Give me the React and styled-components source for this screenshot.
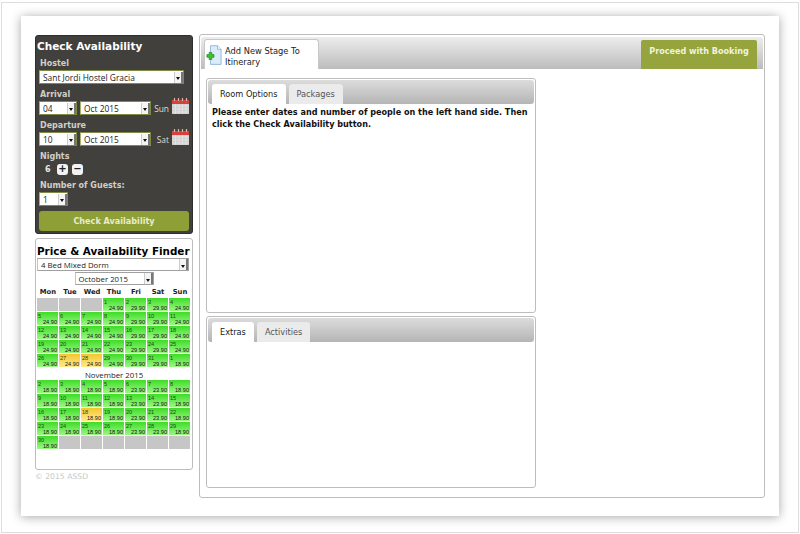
import React from 'react';
import styled, { createGlobalStyle } from 'styled-components';

const GlobalStyle = createGlobalStyle`
  html, body {
    margin: 0;
    padding: 0;
    background: #fff;
  }
  body {
    font-family: 'DejaVu Sans', Verdana, sans-serif;
    color: #111;
  }
  * {
    box-sizing: border-box;
  }
`;

const october = [
  [null, null, null, [1, '24.90'], [2, '29.90'], [3, '29.90'], [4, '24.90']],
  [[5, '24.90'], [6, '24.90'], [7, '24.90'], [8, '24.90'], [9, '29.90'], [10, '29.90'], [11, '24.90']],
  [[12, '24.90'], [13, '24.90'], [14, '24.90'], [15, '24.90'], [16, '29.90'], [17, '29.90'], [18, '24.90']],
  [[19, '24.90'], [20, '24.90'], [21, '24.90'], [22, '24.90'], [23, '29.90'], [24, '29.90'], [25, '24.90']],
  [[26, '24.90'], [27, '24.90', true], [28, '24.90', true], [29, '24.90'], [30, '29.90'], [31, '29.90'], [1, '18.90']],
];

const november = [
  [[2, '18.90'], [3, '18.90'], [4, '18.90'], [5, '18.90'], [6, '23.90'], [7, '23.90'], [8, '18.90']],
  [[9, '18.90'], [10, '18.90'], [11, '18.90'], [12, '18.90'], [13, '23.90'], [14, '23.90'], [15, '18.90']],
  [[16, '18.90'], [17, '18.90'], [18, '18.90', true], [19, '18.90'], [20, '23.90'], [21, '23.90'], [22, '18.90']],
  [[23, '18.90'], [24, '18.90'], [25, '18.90'], [26, '18.90'], [27, '23.90'], [28, '23.90'], [29, '18.90']],
  [[30, '18.90'], null, null, null, null, null, null],
];

const weekDays = ['Mon', 'Tue', 'Wed', 'Thu', 'Fri', 'Sat', 'Sun'];

const CalendarIcon = () => (
  <CalendarSvg width="17" height="16" viewBox="0 0 17 16">
    <rect x="0" y="5" width="17" height="11" fill="#cfcfcf" />
    <path d="M0 8h17M0 11h17M0 14h17M3.5 5v11M7 5v11M10.5 5v11M14 5v11" stroke="#e6e6e6" strokeWidth=".8" />
    <rect x="0" y="2" width="17" height="4" fill="#d8403a" />
    <path d="M2.5 0v3M6.5 0v3M10.5 0v3M14.5 0v3" stroke="#d9b6b2" strokeWidth="1.2" />
  </CalendarSvg>
);

const StageIcon = () => (
  <StageSvg width="16" height="21" viewBox="0 0 18 23">
    <path d="M5 .5h8l4 4v17H5z" fill="#dcebfa" stroke="#8db3da" />
    <path d="M13 .5v4h4" fill="#fff" stroke="#8db3da" />
    <path d="M3.5 8h3v2.5H9v3H6.5V16h-3v-2.5H1v-3h2.5z" fill="#3fc030" stroke="#1f8f24" strokeWidth=".8" />
  </StageSvg>
);

const Dropdown = ({ children, width, plain }) => (
  <SelectBox $width={width} $plain={plain}>
    <SelectText>{children}</SelectText>
    <SelectArrow />
  </SelectBox>
);

const Calendar = ({ rows }) => (
  <CalendarGrid>
    {rows.flat().map((day, index) =>
      day ? (
        <DayCell key={index} $hot={day[2]}>
          <DayNumber>{day[0]}</DayNumber>
          <DayPrice>{day[1]}</DayPrice>
        </DayCell>
      ) : (
        <EmptyCell key={index} />
      )
    )}
  </CalendarGrid>
);

const App = () => (
  <>
    <GlobalStyle />
    <Frame>
      <Page>
        <Sidebar>
          <AvailabilityPanel>
            <PanelTitle>Check Availability</PanelTitle>
            <FieldLabel>Hostel</FieldLabel>
            <Dropdown width="145px">Sant Jordi Hostel Gracia</Dropdown>
            <FieldLabel>Arrival</FieldLabel>
            <DateRow>
              <Dropdown width="38px">04</Dropdown>
              <Dropdown width="71px">Oct 2015</Dropdown>
              <DayName>Sun</DayName>
              <CalendarIcon />
            </DateRow>
            <FieldLabel>Departure</FieldLabel>
            <DateRow>
              <Dropdown width="38px">10</Dropdown>
              <Dropdown width="71px">Oct 2015</Dropdown>
              <DayName>Sat</DayName>
              <CalendarIcon />
            </DateRow>
            <FieldLabel>Nights</FieldLabel>
            <NightsRow>
              <NightsValue>6</NightsValue>
              <RoundButton>+</RoundButton>
              <RoundButton>−</RoundButton>
            </NightsRow>
            <FieldLabel>Number of Guests:</FieldLabel>
            <Dropdown width="29px">1</Dropdown>
            <CheckButton>Check Availability</CheckButton>
          </AvailabilityPanel>
          <FinderPanel>
            <FinderTitle>Price &amp; Availability Finder</FinderTitle>
            <Dropdown width="152px" plain>4 Bed Mixed Dorm</Dropdown>
            <MonthPicker>
              <Dropdown width="79px" plain>October 2015</Dropdown>
            </MonthPicker>
            <WeekHeader>
              {weekDays.map((day) => (
                <span key={day}>{day}</span>
              ))}
            </WeekHeader>
            <Calendar rows={october} />
            <MonthLabel>November 2015</MonthLabel>
            <Calendar rows={november} />
          </FinderPanel>
          <Copyright>© 2015 ASSD</Copyright>
        </Sidebar>
        <Main>
          <MainHeader>
            <StageTab>
              <StageIcon />
              <span>
                Add New Stage To
                <br />
                Itinerary
              </span>
            </StageTab>
            <ProceedButton>Proceed with Booking</ProceedButton>
          </MainHeader>
          <TabPanel $height="235px" $top="9px">
            <TabBar>
              <Tab $active>Room Options</Tab>
              <Tab>Packages</Tab>
            </TabBar>
            <Notice>
              Please enter dates and number of people on the left hand side. Then click the Check
              Availability button.
            </Notice>
          </TabPanel>
          <TabPanel $height="172px" $top="3px">
            <TabBar>
              <Tab $active>Extras</Tab>
              <Tab>Activities</Tab>
            </TabBar>
          </TabPanel>
        </Main>
      </Page>
    </Frame>
  </>
);

export default App;

const Frame = styled.div`
  width: 798px;
  height: 531px;
  margin: 2px 1px 0;
  overflow: hidden;
  padding: 13px 19px 0;
  background: #fff;
  border: 1px solid #dedede;
`;

const Page = styled.div`
  display: flex;
  align-items: flex-start;
  width: 758px;
  height: 500px;
  padding: 18px 0 0 14px;
  background: #fff;
  box-shadow: 0 1px 10px rgba(0, 0, 0, 0.35);
`;

const Sidebar = styled.div`
  width: 158px;
  margin-top: 1px;
`;

const AvailabilityPanel = styled.div`
  height: 199px;
  padding: 3px 3px 0;
  background: #41403d;
  border: 1px solid #2e2e2c;
  border-radius: 3px;
  color: #fff;
`;

const PanelTitle = styled.h2`
  margin: 0 0 0 -2px;
  font-size: 10.5px;
  line-height: 14px;
  font-weight: 700;
  white-space: nowrap;
`;

const FieldLabel = styled.div`
  margin: 5px 0 0 1px;
  font-size: 8px;
  line-height: 12px;
  font-weight: 700;
  white-space: nowrap;
  color: #cfcfc8;
`;

const SelectBox = styled.div`
  display: flex;
  align-items: center;
  justify-content: space-between;
  width: ${(p) => p.$width};
  height: ${(p) => (p.$plain ? '13px' : '14px')};
  padding-left: 3px;
  background: #fff;
  border: 1px solid ${(p) => (p.$plain ? '#a0a0a0' : '#7f8a45')};
  border-left-color: ${(p) => (p.$plain ? '#c4c4c4' : '#a8b070')};
  font-family: 'Open Sans', sans-serif;
  font-size: ${(p) => (p.$plain ? '7.8px' : '8.4px')};
  color: #222;
`;

const SelectText = styled.span`
  white-space: nowrap;
`;

const SelectArrow = styled.span`
  display: flex;
  align-items: center;
  justify-content: center;
  width: 9px;
  height: 11px;
  flex: none;
  padding-top: 3px;
  background: #f4f4f4;
  border-left: 1px solid #ccc;
  border-right: 2px solid #777;
  &::after {
    content: '';
    border-top: 3px solid #111;
    border-left: 2.5px solid transparent;
    border-right: 2.5px solid transparent;
  }
`;

const DateRow = styled.div`
  display: flex;
  align-items: center;
  gap: 3px;
  height: 14px;
`;

const DayName = styled.span`
  width: 15px;
  font-family: 'Open Sans', sans-serif;
  font-size: 8.4px;
  text-align: right;
  color: #ddd;
`;

const CalendarSvg = styled.svg`
  flex: none;
  margin-top: -5px;
`;

const StageSvg = styled.svg`
  flex: none;
  margin: -1px 3px 0 0;
`;

const NightsRow = styled.div`
  display: flex;
  align-items: center;
  gap: 4px;
  height: 12px;
  padding-left: 6px;
`;

const NightsValue = styled.span`
  width: 8px;
  font-size: 8px;
  font-weight: 700;
  color: #e8e8e8;
`;

const RoundButton = styled.span`
  display: flex;
  align-items: center;
  justify-content: center;
  width: 11px;
  height: 11px;
  background: #f2f2f2;
  border-radius: 3px;
  font-size: 10px;
  font-weight: 700;
  line-height: 1;
  color: #222;
`;

const CheckButton = styled.div`
  height: 20px;
  margin-top: 5px;
  background: #8e9f37;
  border-radius: 3px;
  font-size: 8.1px;
  line-height: 20px;
  font-weight: 700;
  text-align: center;
  color: #e8eccb;
`;

const FinderPanel = styled.div`
  height: 232px;
  margin-top: 4px;
  padding: 6px 1px 0;
  background: #fff;
  border: 1px solid #bdbdbd;
  border-radius: 3px;
`;

const FinderTitle = styled.h3`
  margin: 0;
  font-size: 10.4px;
  line-height: 13px;
  font-weight: 700;
  white-space: nowrap;
  color: #000;
`;

const MonthPicker = styled.div`
  display: flex;
  justify-content: center;
  margin-top: 1px;
`;

const WeekHeader = styled.div`
  display: grid;
  grid-template-columns: repeat(7, 22px);
  height: 11px;
  margin-top: 2px;
  font-size: 6.8px;
  line-height: 11px;
  font-weight: 700;
  text-align: center;
  color: #222;
`;

const CalendarGrid = styled.div`
  display: grid;
  grid-template-columns: repeat(7, 22px);
  grid-auto-rows: 14px;
`;

const DayCell = styled.div`
  display: flex;
  flex-direction: column;
  margin: 0 1px 1px 0;
  padding: 1px 1px 0;
  overflow: hidden;
  background: ${(p) =>
    p.$hot
      ? 'linear-gradient(#f6c530, #fdeb8c)'
      : 'linear-gradient(#3fdc28, #9af782)'};
  font-family: 'Liberation Sans', Arial, sans-serif;
  font-size: 5.6px;
  line-height: 6px;
  color: #1f4a18;
`;

const DayNumber = styled.span``;

const DayPrice = styled.span`
  text-align: right;
  color: #111;
`;

const EmptyCell = styled.div`
  margin: 0 1px 1px 0;
  background: #c6c6c6;
`;

const MonthLabel = styled.div`
  height: 10px;
  margin-top: 2px;
  font-family: 'Open Sans', sans-serif;
  font-size: 7.8px;
  line-height: 10px;
  text-align: center;
  color: #222;
`;

const Copyright = styled.div`
  margin-top: 1px;
  font-size: 7.7px;
  line-height: 12px;
  color: #c8c8c8;
`;

const Main = styled.div`
  width: 566px;
  height: 464px;
  margin-left: 6px;
  padding: 2px 1px 0;
  background: #fff;
  border: 1px solid #bdbdbd;
  border-radius: 3px;
`;

const MainHeader = styled.div`
  display: flex;
  align-items: flex-end;
  justify-content: space-between;
  height: 32px;
  padding-left: 3px;
  background: linear-gradient(#ededed, #bcbcbc);
  border-radius: 3px 3px 0 0;
`;

const StageTab = styled.div`
  display: flex;
  width: 115px;
  height: 30px;
  padding: 6px 0 0 1px;
  background: #fff;
  border: 1px solid #c8c8c8;
  border-bottom: 0;
  border-radius: 3px 3px 0 0;
  font-size: 8.3px;
  line-height: 11px;
  color: #222;
`;

const ProceedButton = styled.div`
  width: 116px;
  height: 29px;
  margin-right: 6px;
  padding-top: 6px;
  background: #95a43c;
  border-radius: 2px 2px 0 0;
  font-size: 8.1px;
  font-weight: 700;
  text-align: center;
  color: #f1f3de;
`;

const TabPanel = styled.div`
  width: 330px;
  height: ${(p) => p.$height};
  margin: ${(p) => p.$top} 0 0 5px;
  padding: 1px;
  background: #fff;
  border: 1px solid #bdbdbd;
  border-radius: 3px;
`;

const TabBar = styled.div`
  display: flex;
  align-items: flex-end;
  gap: 3px;
  height: 24px;
  padding-left: 4px;
  background: linear-gradient(#dcdcdc, #b5b5b5);
  border-radius: 3px;
`;

const Tab = styled.div`
  display: flex;
  align-items: center;
  justify-content: center;
  height: 20px;
  padding: 0 8px;
  background: ${(p) => (p.$active ? '#fff' : '#ebebeb')};
  border-radius: 3px 3px 0 0;
  font-size: 8.2px;
  color: ${(p) => (p.$active ? '#222' : '#555')};
`;

const Notice = styled.p`
  margin: 3px 0 0 4px;
  font-size: 8.1px;
  line-height: 11.5px;
  font-weight: 700;
  color: #111;
`;
